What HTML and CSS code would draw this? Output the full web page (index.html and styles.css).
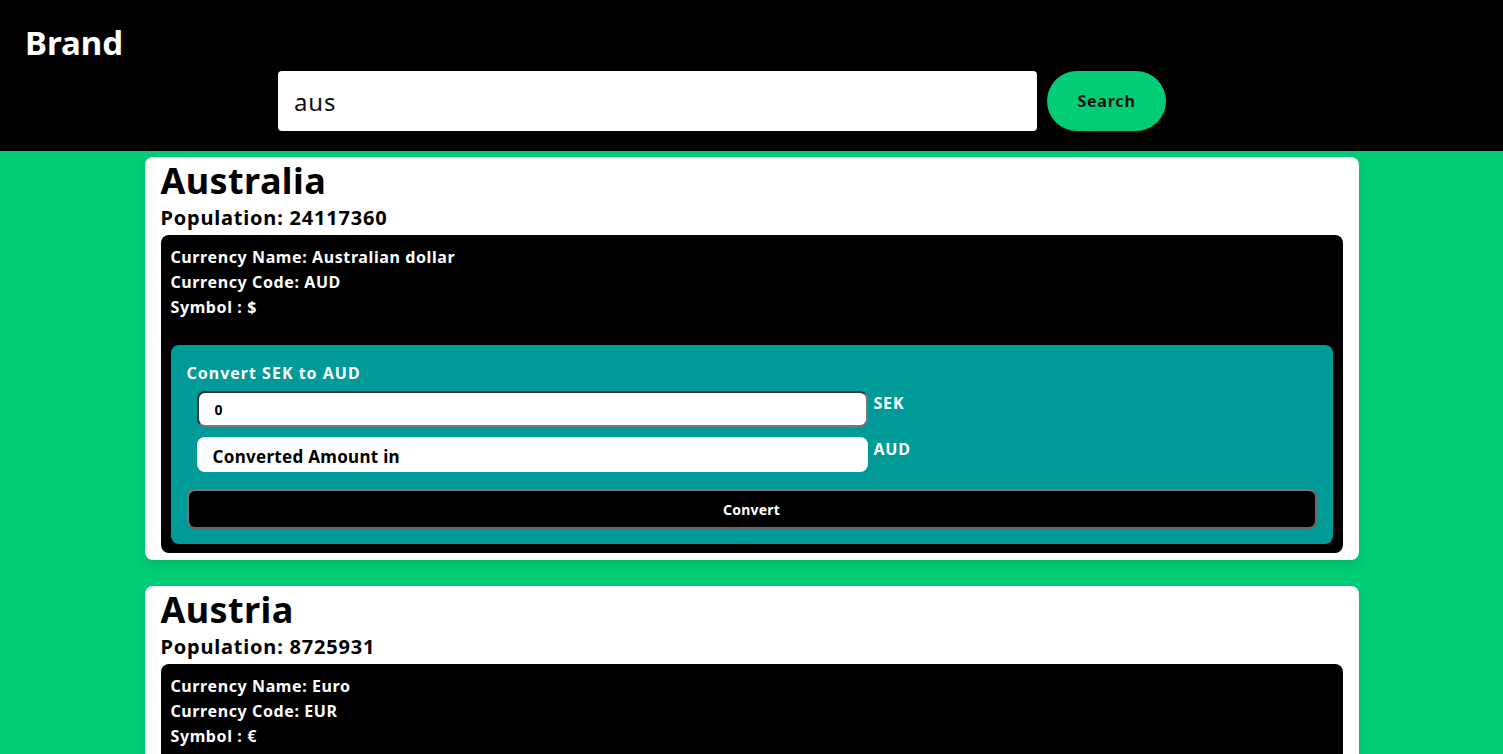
FILE: index.html
```html
<!DOCTYPE html>
<html>
<head>
<meta charset="utf-8">
<link rel="stylesheet" href="styles.css">
</head>
<body>
<header class="topbar">
  <div class="brand">Brand</div>
  <form class="search">
    <input class="search-input" type="text" value="aus">
    <button class="search-btn" type="button">Search</button>
  </form>
</header>
<main class="list">
  <section class="card">
    <h1 class="country">Australia</h1>
    <h2 class="population">Population: 24117360</h2>
    <div class="currency">
      <p class="cur-line">Currency Name: Australian dollar</p>
      <p class="cur-line">Currency Code: AUD</p>
      <p class="cur-line">Symbol : $</p>
      <div class="converter">
        <p class="conv-title">Convert SEK to AUD</p>
        <div class="conv-row">
          <input class="conv-input bordered" type="text" value="0">
          <span class="conv-unit">SEK</span>
        </div>
        <div class="conv-row">
          <div class="conv-input out">Converted Amount in</div>
          <span class="conv-unit">AUD</span>
        </div>
        <button class="conv-btn" type="button">Convert</button>
      </div>
    </div>
  </section>
  <section class="card">
    <h1 class="country">Austria</h1>
    <h2 class="population">Population: 8725931</h2>
    <div class="currency">
      <p class="cur-line">Currency Name: Euro</p>
      <p class="cur-line">Currency Code: EUR</p>
      <p class="cur-line">Symbol : €</p>
      <div class="converter">
        <p class="conv-title">Convert SEK to EUR</p>
        <div class="conv-row">
          <input class="conv-input bordered" type="text" value="0">
          <span class="conv-unit">SEK</span>
        </div>
        <div class="conv-row">
          <div class="conv-input out">Converted Amount in</div>
          <span class="conv-unit">EUR</span>
        </div>
        <button class="conv-btn" type="button">Convert</button>
      </div>
    </div>
  </section>
</main>
</body>
</html>
```

FILE: styles.css
```css
* { box-sizing: border-box; }
html, body { margin: 0; padding: 0; }
body {
  background: #00cd76;
  font-family: "Noto Sans", "Open Sans", sans-serif;
  color: #000;
}
.topbar {
  background: #000;
  height: 151px;
  padding: 22px 0 0 25px;
}
.brand {
  color: #fff;
  font-weight: 700;
  font-size: 33px;
  line-height: 42px;
}
.search {
  display: flex;
  gap: 10px;
  margin: 7px 0 0 253px;
}
.search-input {
  width: 759px;
  height: 60px;
  border: none;
  border-radius: 4px;
  padding: 0 16px;
  font-family: "Noto Sans", sans-serif;
  font-size: 24px;
  letter-spacing: 0.8px;
  color: #111;
  outline: none;
}
.search-btn {
  width: 119px;
  height: 60px;
  border: none;
  border-radius: 30px;
  background: #00cd76;
  font-family: "Noto Sans", sans-serif;
  font-weight: 700;
  font-size: 16px;
  letter-spacing: 0.8px;
  color: #111;
}
.list {
  display: flex;
  flex-direction: column;
  align-items: center;
  gap: 26px;
  padding-top: 6px;
}
.card {
  width: 1214px;
  background: #fff;
  border-radius: 8px;
  padding: 2px 16px 7px;
  box-shadow: 0 4px 8px rgba(0,0,0,0.12);
}
.country {
  margin: 0;
  font-size: 36px;
  line-height: 44px;
  font-weight: 700;
  letter-spacing: 0.4px;
}
.population {
  margin: 0 0 3px;
  font-size: 20px;
  line-height: 29px;
  font-weight: 700;
  letter-spacing: 0.8px;
}
.currency {
  background: #000;
  border-radius: 8px;
  padding: 10px 10px 9px;
  color: #fff;
}
.cur-line {
  margin: 0;
  font-size: 16px;
  font-weight: 700;
  line-height: 25px;
  letter-spacing: 0.6px;
}
.converter {
  margin-top: 25px;
  background: #009b98;
  border-radius: 8px;
  padding: 16px 16px 15px;
}
.conv-title {
  margin: 0 0 6px;
  font-size: 16px;
  font-weight: 700;
  line-height: 24px;
  letter-spacing: 1px;
}
.conv-row {
  display: flex;
  align-items: flex-start;
  gap: 6px;
  margin-left: 10px;
  margin-bottom: 10px;
}
.conv-input {
  width: 671px;
  height: 35px;
  background: #fff;
  border-radius: 8px;
  font-family: "Noto Sans", sans-serif;
  font-weight: 700;
  color: #000;
}
.conv-input.bordered {
  height: 36px;
  border: 2px solid #333;
  border-right-color: #777;
  border-bottom-color: #777;
  padding: 0 16px;
  font-size: 14px;
  outline: none;
}
.conv-input.out {
  font-size: 17px;
  padding: 8px 16px 0;
  line-height: 24px;
  letter-spacing: 0.3px;
}
.conv-unit {
  font-size: 16px;
  font-weight: 700;
  line-height: 24px;
  letter-spacing: 0.8px;
}
.conv-btn {
  display: block;
  width: 100%;
  height: 40px;
  margin-top: 17px;
  background: #000;
  color: #fff;
  border: 2px solid #666;
  border-top-color: #777;
  border-left-color: #777;
  border-radius: 8px;
  font-family: "Noto Sans", sans-serif;
  font-weight: 700;
  font-size: 14px;
  letter-spacing: 0.2px;
}
```
